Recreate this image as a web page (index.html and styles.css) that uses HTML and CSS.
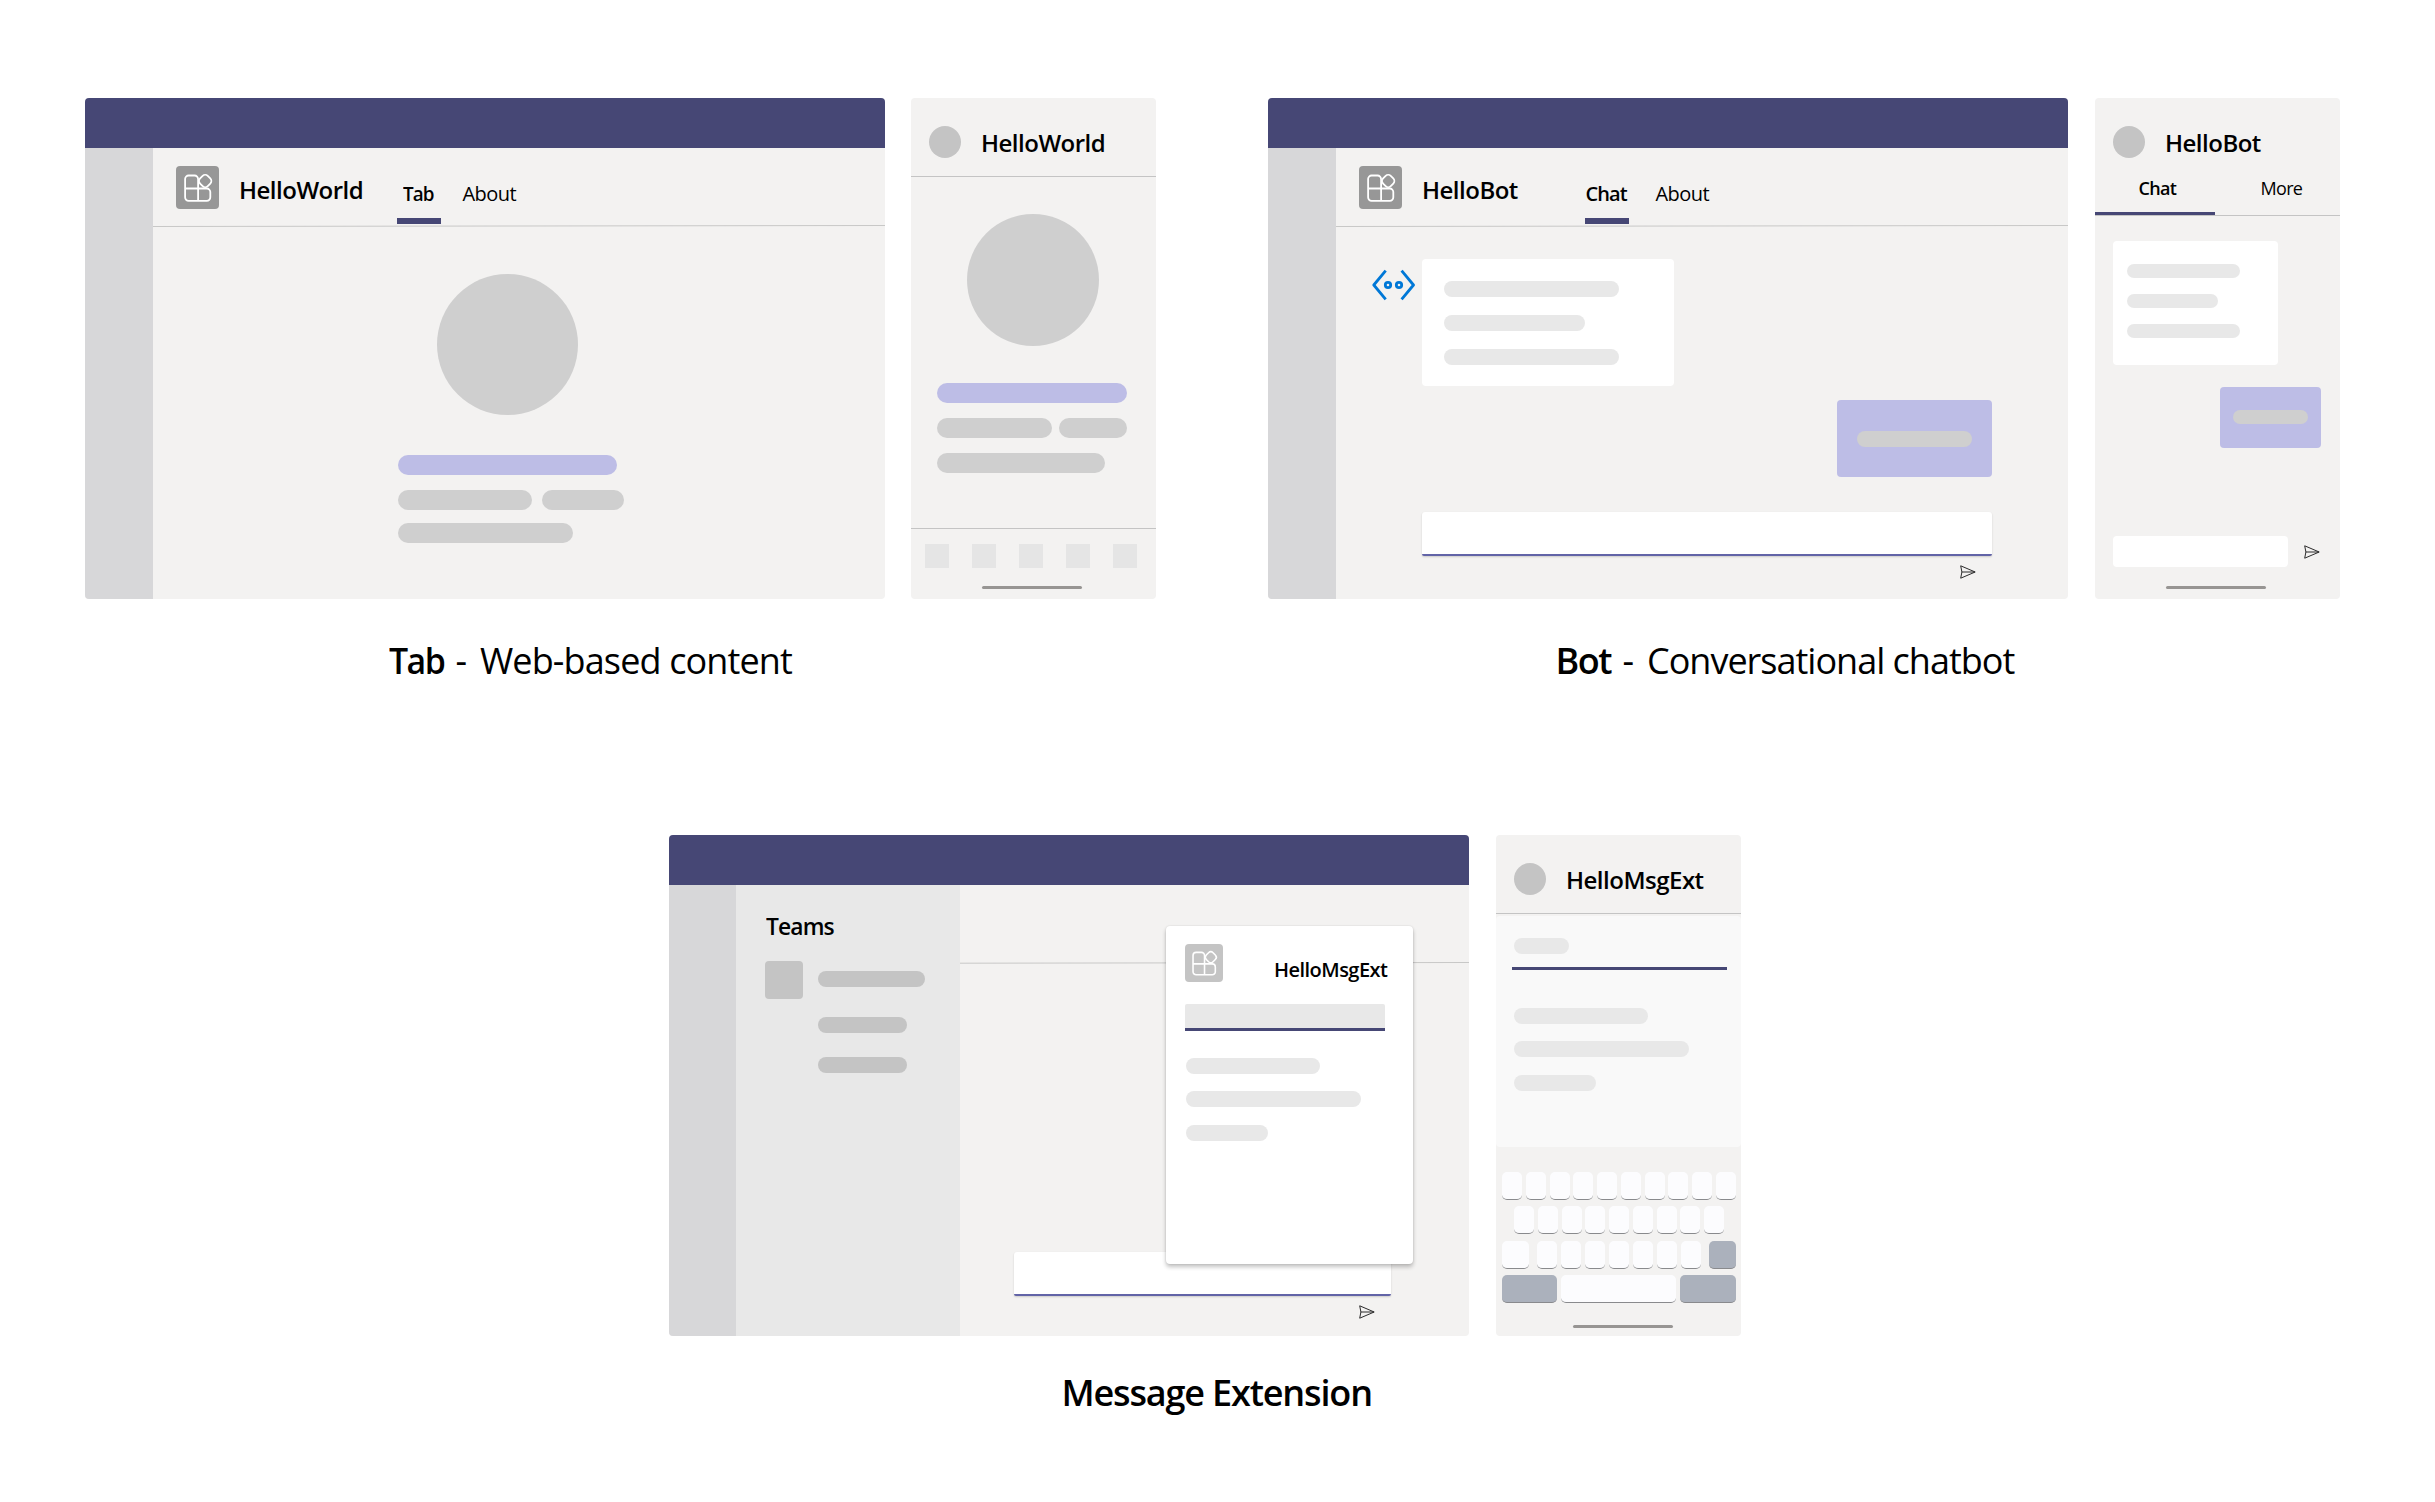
FILE: index.html
```
<!DOCTYPE html>
<html lang="en">
<head>
<meta charset="utf-8">
<title>App capabilities</title>
<link rel="stylesheet" href="styles.css">
</head>
<body>
<svg class="defs" width="0" height="0" aria-hidden="true">
  <symbol id="app" viewBox="0 0 43 43">
    <path d="M22.1 22.5V13a3.5 3.5 0 0 0-3.5-3.5h-6A3.5 3.5 0 0 0 9.1 13v18.3a3.5 3.5 0 0 0 3.5 3.5h18.2a3.5 3.5 0 0 0 3.5-3.5V26a3.5 3.5 0 0 0-3.5-3.5H9.1M22.1 22.5v12.3" fill="none" stroke="#fff" stroke-width="1.8"/>
    <rect x="23.8" y="9.6" width="10.8" height="10.8" rx="3.6" transform="rotate(45 29.2 15)" fill="none" stroke="#fff" stroke-width="1.8"/>
  </symbol>
  <symbol id="send" viewBox="0 0 16 14">
    <path d="M.7.8 15.2 7 .7 13.2 1.9 7zM1.9 7h13" fill="none" stroke="#2b2b2b" stroke-width="1" stroke-linejoin="round"/>
  </symbol>
</svg>

<main class="page">
  <div class="row">
    <figure class="demo">
      <div class="frames">
        <section class="desktop">
          <div class="topbar"></div>
          <div class="body">
            <div class="rail"></div>
            <div class="content">
              <header class="apphead">
                <svg class="appicon"><use href="#app"/></svg>
                <h2 class="title">HelloWorld</h2>
                <nav class="tabs tabs-world">
                  <span class="tab active"><b class="t-tab">Tab</b></span>
                  <span class="tab t-about">About</span>
                </nav>
              </header>
              <svg class="rule" viewBox="0 0 732 2" preserveAspectRatio="none"><line x1="0" y1="1.5" x2="732" y2=".5"/></svg>
              <div class="profile">
                <div class="disc"></div>
                <div class="lines">
                  <i class="bar lilac w219"></i>
                  <div class="pair"><i class="bar w134"></i><i class="bar w82"></i></div>
                  <i class="bar w175 nudge"></i>
                </div>
              </div>
            </div>
          </div>
        </section>
        <section class="phone gap26">
          <header class="phonehead"><i class="avatar"></i><h2 class="title">HelloWorld</h2></header>
          <div class="phoneprofile">
            <div class="disc"></div>
            <i class="bar lilac w190"></i>
            <div class="pair"><i class="bar w115"></i><i class="bar w68"></i></div>
            <i class="bar w168"></i>
          </div>
          <footer class="dock"><i></i><i></i><i></i><i></i><i></i></footer>
          <i class="home"></i>
        </section>
      </div>
      <figcaption class="cap cap-tab"><b class="c-tab">Tab</b><span class="dash">-</span><span class="c-web">Web-based content</span></figcaption>
    </figure>

    <figure class="demo">
      <div class="frames">
        <section class="desktop">
          <div class="topbar"></div>
          <div class="body">
            <div class="rail"></div>
            <div class="content">
              <header class="apphead">
                <svg class="appicon"><use href="#app"/></svg>
                <h2 class="title">HelloBot</h2>
                <nav class="tabs tabs-bot">
                  <span class="tab active"><b class="t-chat">Chat</b></span>
                  <span class="tab t-about">About</span>
                </nav>
              </header>
              <svg class="rule" viewBox="0 0 732 2" preserveAspectRatio="none"><line x1="0" y1="1.5" x2="732" y2=".5"/></svg>
              <div class="chat">
                <div class="incoming">
                  <svg class="boticon" viewBox="0 0 44 32" fill="none" stroke="#0078d7">
                    <path d="M13.7 1.6 1.8 16l11.9 14.4M29.6 1.6 41.5 16 29.6 30.4" stroke-width="2.8" stroke-linejoin="round"/>
                    <g stroke-width="2.8"><circle cx="16" cy="16" r="2.7"/><circle cx="27" cy="16" r="2.7"/></g>
                  </svg>
                  <div class="card"><i class="bar pale w175"></i><i class="bar pale w141"></i><i class="bar pale w175"></i></div>
                </div>
                <div class="reply"><i class="bar"></i></div>
                <div class="compose"></div>
                <svg class="send"><use href="#send"/></svg>
              </div>
            </div>
          </div>
        </section>
        <section class="phone">
          <header class="phonehead short"><i class="avatar"></i><h2 class="title">HelloBot</h2></header>
          <nav class="phonetabs"><span class="on"><b>Chat</b></span><span>More</span></nav>
          <div class="phonechat">
            <div class="card"><i class="bar pale w113"></i><i class="bar pale w91"></i><i class="bar pale w113"></i></div>
            <div class="reply"><i class="bar"></i></div>
            <div class="phonesend"><div class="field"></div><svg class="send"><use href="#send"/></svg></div>
          </div>
          <i class="home"></i>
        </section>
      </div>
      <figcaption class="cap cap-bot"><b class="c-bot">Bot</b><span class="dash">-</span><span class="c-conv">Conversational chatbot</span></figcaption>
    </figure>
  </div>

  <figure class="demo third">
    <div class="frames">
      <section class="desktop">
        <div class="topbar"></div>
        <div class="body">
          <div class="rail narrow"></div>
          <aside class="teams">
            <h2 class="title t-teams">Teams</h2>
            <div class="team"><i class="square"></i><div class="channels"><i class="w107"></i><i class="w89"></i><i class="w89"></i></div></div>
          </aside>
          <div class="content">
            <div class="blank"></div>
            <svg class="rule" viewBox="0 0 509 2" preserveAspectRatio="none"><line x1="0" y1="1.2" x2="509" y2=".5"/></svg>
            <div class="compose msg"></div>
            <svg class="send msgsend"><use href="#send"/></svg>
          </div>
          <div class="popup">
            <div class="pophead"><svg class="appicon small"><use href="#app"/></svg><h3 class="poptitle">HelloMsgExt</h3></div>
            <div class="search"></div>
            <div class="results"><i class="bar pale w134"></i><i class="bar pale w175"></i><i class="bar pale w82"></i></div>
          </div>
        </div>
      </section>
      <section class="phone">
        <header class="phonehead"><i class="avatar"></i><h2 class="title">HelloMsgExt</h2></header>
        <div class="sheet">
          <i class="bar pale w55"></i>
          <div class="underline"></div>
          <div class="results"><i class="bar pale w134"></i><i class="bar pale w175"></i><i class="bar pale w82"></i></div>
        </div>
        <div class="keys">
          <div class="keyrow"><i></i><i></i><i></i><i></i><i></i><i></i><i></i><i></i><i></i><i></i></div>
          <div class="keyrow inset"><i></i><i></i><i></i><i></i><i></i><i></i><i></i><i></i><i></i></div>
          <div class="keyrow"><i class="shift"></i><div class="letters"><i></i><i></i><i></i><i></i><i></i><i></i><i></i></div><i class="dark shift"></i></div>
          <div class="keyrow"><i class="dark fn"></i><i class="space"></i><i class="dark fn"></i></div>
        </div>
        <i class="home low"></i>
      </section>
    </div>
    <figcaption class="cap cap-msg"><b class="c-msg">Message Extension</b></figcaption>
  </figure>
</main>
</body>
</html>
```
FILE: styles.css
```
* { box-sizing: border-box; }
body { margin: 0; background: #fff; color: #000; font-family: "Open Sans", "Noto Sans", sans-serif; }
h2, h3, figure { margin: 0; }
b, h2, h3 { font-weight: 600; }
i { display: block; flex: none; }
svg { display: block; flex: none; }
.defs { position: absolute; }

.page { width: 2435px; height: 1502px; padding: 98px 0 0 85px; overflow: hidden; }
.row { display: flex; gap: 112px; height: 586px; }
.frames { display: flex; gap: 27px; height: 501px; }
.third { margin: 151px 0 0 584px; }

/* Desktop window */
.desktop { width: 800px; display: flex; flex-direction: column; border-radius: 4px; overflow: hidden; background: #f3f2f1; }
.topbar { height: 50px; background: #464775; }
.body { flex: 1; display: flex; position: relative; }
.rail { width: 68px; background: #d7d7d9; }
.rail.narrow { width: 67px; }
.content { flex: 1; display: flex; flex-direction: column; }
.apphead { height: 77px; display: flex; padding: 18px 0 0 23px; }
.appicon { width: 43px; height: 43px; background: #979797; border-radius: 4px; }
.title { font-size: 24px; line-height: 32px; letter-spacing: -.5px; white-space: nowrap; }
.apphead .title { width: 156px; margin: 8px 0 0 20px; }
.tabs { display: flex; margin-top: 14px; height: 44px; }
.tab { padding-top: 2px; font-size: 20px; line-height: 24px; letter-spacing: -.54px; white-space: nowrap; }
.tab b { display: block; }
.active { width: 44px; height: 44px; border-bottom: 6px solid #464775; }
.tabs-world { margin-left: 2px; }
.tabs-bot { margin-left: 7px; }
.tabs-world .t-about { margin-left: 21.5px; }
.tabs-bot .t-about { margin-left: 26.5px; }
.t-tab { margin-left: 6px; letter-spacing: -1px; transform: scaleX(.94); transform-origin: 0 0; }
.t-chat { letter-spacing: -.9px; margin-left: .5px; }
.rule { width: 100%; height: 2px; }
.rule line { stroke: #c8c8c7; stroke-width: 1; }

/* Placeholder shapes */
.bar { height: 20px; border-radius: 10px; background: #cfcfcf; }
.lilac { background: #bdbde6; }
.pale { background: #e8e8e8; height: 16px; border-radius: 8px; }
.pair { display: flex; justify-content: space-between; }
.w219 { width: 219px; } .w190 { width: 190px; } .w175 { width: 175px; } .w168 { width: 168px; }
.w141 { width: 141px; } .w134 { width: 134px; } .w115 { width: 115px; } .w113 { width: 113px; }
.w107 { width: 107px; } .w91 { width: 91px; } .w89 { width: 89px; } .w82 { width: 82px; }
.w68 { width: 68px; } .w55 { width: 55px; }
.disc { border-radius: 50%; background: #cfcfcf; }

.profile { padding: 47px 0 0 245px; }
.profile .disc { width: 141px; height: 141px; margin-left: 39px; }
.lines { width: 226px; margin-top: 40px; display: flex; flex-direction: column; gap: 15px; }
.nudge { margin-top: -1.6px; }

/* Phone */
.phone { width: 245px; display: flex; flex-direction: column; border-radius: 4px; overflow: hidden; background: #f3f2f1; }
.gap26 { margin-left: -1px; }
.phonehead { height: 79px; display: flex; padding: 28px 0 0 18px; border-bottom: 1px solid #c4c4c4; flex: none; }
.phonehead .title { margin: 1px 0 0 20px; }
.avatar { width: 32px; height: 32px; border-radius: 50%; background: #c4c4c4; }
.short { height: 68px; border: 0; }
.phoneprofile { height: 351px; width: 216px; padding: 37px 0 0 26px; display: flex; flex-direction: column; gap: 15px; }
.phoneprofile .disc { width: 132px; height: 132px; margin: 0 0 22px 30px; }
.dock { border-top: 1px solid #c4c4c4; height: 58px; display: flex; gap: 23px; padding: 15px 0 0 14px; }
.dock i { width: 24px; height: 24px; background: #e5e5e5; }
.home { width: 100px; height: 3px; border-radius: 2px; background: #979593; margin: auto 0 10px 71px; }
.low { margin: auto 0 8px 77px; }

/* Chat */
.chat { display: flex; flex-direction: column; padding: 32px 76px 0 36px; }
.incoming { display: flex; }
.boticon { width: 44px; height: 32px; margin-top: 10px; }
.card { background: #fff; border-radius: 4px; display: flex; flex-direction: column; }
.chat .card { width: 252px; height: 127px; margin-left: 6px; padding: 22px; gap: 18px; }
.reply { background: #bdbde6; border-radius: 4px; display: flex; align-items: center; justify-content: center; align-self: flex-end; }
.chat .reply { width: 155px; height: 77px; margin-top: 14px; }
.chat .reply .bar { width: 115px; height: 16px; }
.compose { background: #fff; border-radius: 3px 3px 2px 2px; height: 44px; border-bottom: 2px solid #6264a7; box-shadow: 0 1px 2px rgba(0, 0, 0, .16); }
.chat .compose { width: 570px; margin: 35px 0 0 50px; }
.send { width: 16px; height: 14px; }
.chat .send { margin: 9px 16px 0 auto; }

.phonetabs { display: flex; height: 50px; font-size: 18px; line-height: 24px; letter-spacing: -.68px; border-bottom: 1px solid #c4c4c4; }
.phonetabs span { padding: 10px 0 0 45.5px; }
.phonetabs .on { width: 120px; padding-left: 43.5px; border-bottom: 3px solid #464775; }
.phonechat { display: flex; flex-direction: column; padding: 25px 19px 0 18px; }
.phonechat .card { width: 165px; height: 124px; padding: 23px 14px; gap: 16px; }
.phonechat .bar { height: 14px; border-radius: 7px; }
.phonechat .reply { width: 101px; height: 61px; margin-top: 22px; }
.phonechat .reply .bar { width: 75px; margin-bottom: 1px; }
.phonesend { display: flex; align-items: center; gap: 16px; margin-top: 88px; }
.field { width: 175px; height: 31px; border-radius: 4px; background: #fff; }

/* Message extension */
.teams { width: 224px; background: #e8e8e8; padding: 25px 0 0 29px; }
.t-teams { letter-spacing: -.9px; transform: scaleX(.95); transform-origin: 0 0; margin-left: 1px; }
.team { display: flex; gap: 15px; margin-top: 19px; }
.square { width: 38px; height: 38px; border-radius: 4px; background: #c4c4c4; }
.channels { padding-top: 10px; }
.channels i { height: 16px; border-radius: 8px; background: #c4c4c4; margin-bottom: 24px; }
.channels i:first-child { margin-bottom: 30px; }
.blank { height: 77px; }
.msg { width: 377px; margin: 288px 0 0 54px; }
.msgsend { margin: 9px 94px 0 auto; }
.popup { position: absolute; left: 497px; top: 41px; width: 247px; height: 338px; border-radius: 4px; background: #fff; padding: 18px 19px; box-shadow: 0 3px 4px rgba(0, 0, 0, .24), 0 0 2px rgba(0, 0, 0, .12); }
.pophead { display: flex; height: 38px; }
.small { width: 38px; height: 38px; background: #c4c4c4; }
.poptitle { font-size: 20px; line-height: 28px; letter-spacing: -.53px; margin: 12px 0 0 51px; }
.search { width: 200px; height: 27px; margin-top: 22px; background: #e8e8e8; border-bottom: 3px solid #464775; border-radius: 2px 2px 0 0; }
.results { display: flex; flex-direction: column; gap: 17.4px; margin: 27px 0 0 1px; }
.sheet { height: 231px; margin-top: 2px; background: #f9f9f9; border-radius: 4px; padding: 22px 0 0 18px; flex: none; }
.underline { width: 215px; height: 3px; margin: 13px 0 0 -2px; background: #464775; }
.sheet .results { margin: 38px 0 0; }
.keys { padding: 25px 5px 0 6px; display: flex; flex-direction: column; gap: 6.3px; }
.keyrow { display: flex; justify-content: space-between; }
.keyrow i { width: 20px; height: 28px; border-radius: 5px; background: #fcfcfe; border-bottom: 1px solid #898a8d; }
.inset { padding: 0 12px; }
.letters { display: flex; justify-content: space-between; width: 164px; }
.keyrow .shift { width: 27px; }
.keyrow .fn { width: 56px; }
.keyrow .fn:first-child { width: 55px; }
.keyrow .space { width: 115px; }
.keyrow .dark { background: #abb1bc; }

/* Captions */
.cap { display: flex; height: 48px; margin-top: 38px; font-size: 36px; line-height: 48px; white-space: nowrap; }
.cap b { display: block; }
.cap-tab { padding-left: 303.5px; }
.c-tab { width: 67px; letter-spacing: -1.6px; transform: scaleX(.94); transform-origin: 0 0; }
.dash { width: 24.5px; }
.c-web { letter-spacing: -.87px; }
.cap-bot { padding-left: 287.5px; }
.c-bot { width: 67px; letter-spacing: -1.5px; }
.c-conv { letter-spacing: -1px; }
.cap-msg { padding-left: 392.5px; margin-top: 33px; }
.c-msg { letter-spacing: -1.16px; }
```
